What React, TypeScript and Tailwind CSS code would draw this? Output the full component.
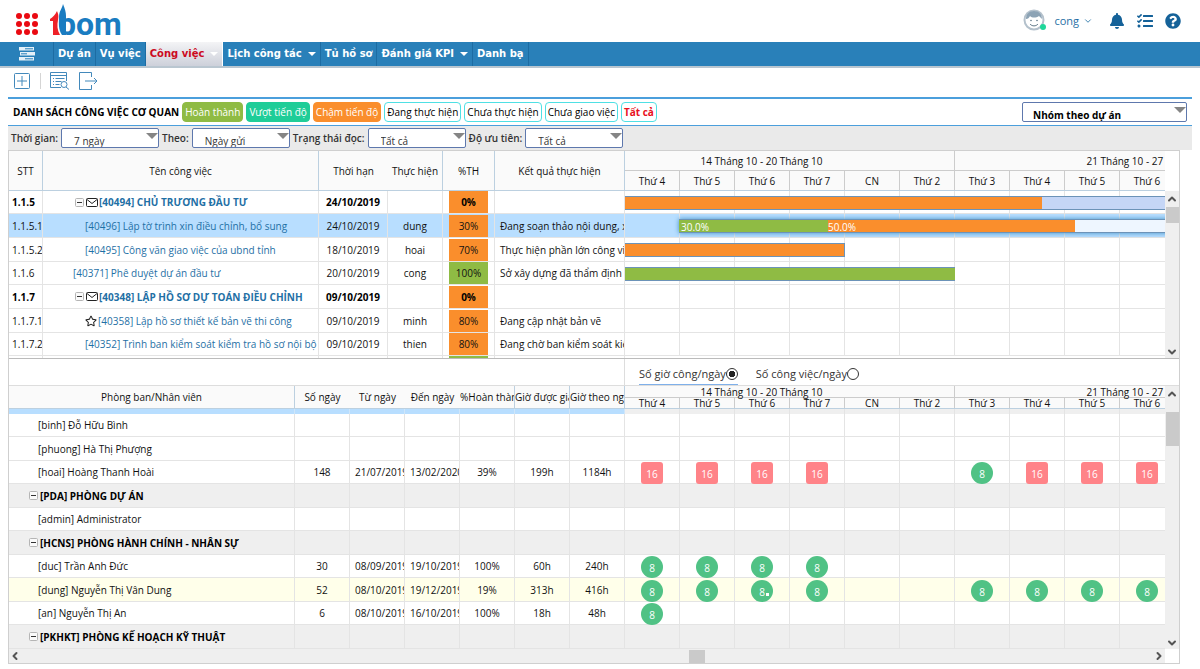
import React from "react";
import clsx from "clsx";
import { FaBell, FaTasks, FaQuestionCircle, FaRegStar } from "react-icons/fa";
import { ChevronDown, ChevronLeft, ChevronRight, ChevronUp } from "lucide-react";

interface Task {
  no: string;
  id: number;
  name: string;
  due: string;
  owner?: string;
  percent: number;
  result?: string;
  indent: string;
  group?: boolean;
  star?: boolean;
  selected?: boolean;
}

interface Staff {
  name: string;
  group?: boolean;
  highlighted?: boolean;
  stats?: string[];
  hours?: Record<number, number>;
}

const days = [
  "Thứ 4", "Thứ 5", "Thứ 6", "Thứ 7", "CN", "Thứ 2", "Thứ 3",
  "Thứ 4", "Thứ 5", "Thứ 6",
];

const navItems = [
  { label: "Dự án" },
  { label: "Vụ việc" },
  { label: "Công việc", menu: true, active: true },
  { label: "Lịch công tác", menu: true },
  { label: "Tủ hồ sơ" },
  { label: "Đánh giá KPI", menu: true },
  { label: "Danh bạ" },
];

const statuses = [
  { label: "Hoàn thành", className: "border-[#8fbb44] bg-[#8fbb44] text-white" },
  { label: "Vượt tiến độ", className: "border-[#1fcd98] bg-[#1fcd98] text-white" },
  { label: "Chậm tiến độ", className: "border-[#fa8e2c] bg-[#fa8e2c] text-white" },
  { label: "Đang thực hiện", className: "border-[#4fe0e4] bg-white text-black" },
  { label: "Chưa thực hiện", className: "border-[#4fe0e4] bg-white text-black" },
  { label: "Chưa giao việc", className: "border-[#4fe0e4] bg-white text-black" },
  { label: "Tất cả", className: "border-[#4fe0e4] bg-white font-bold text-[#e8101c]" },
];

const filters = [
  { id: "period", label: "Thời gian:", value: "7 ngày" },
  { id: "by", label: "Theo:", value: "Ngày gửi" },
  { id: "read", label: "Trạng thái đọc:", value: "Tất cả" },
  { id: "priority", label: "Độ ưu tiên:", value: "Tất cả" },
];

const tasks: Task[] = [
  { no: "1.1.5", id: 40494, name: "CHỦ TRƯƠNG ĐẦU TƯ", due: "24/10/2019", percent: 0, indent: "pl-8", group: true },
  { no: "1.1.5.1", id: 40496, name: "Lập tờ trình xin điều chỉnh, bổ sung", due: "24/10/2019", owner: "dung", percent: 30, result: "Đang soạn thảo nội dung, xin", indent: "pl-[42px]", selected: true },
  { no: "1.1.5.2", id: 40495, name: "Công văn giao việc của ubnd tỉnh", due: "18/10/2019", owner: "hoai", percent: 70, result: "Thực hiện phần lớn công việc", indent: "pl-[42px]" },
  { no: "1.1.6", id: 40371, name: "Phê duyệt dự án đầu tư", due: "20/10/2019", owner: "cong", percent: 100, result: "Sở xây dựng đã thẩm định thiết", indent: "pl-[30px]" },
  { no: "1.1.7", id: 40348, name: "LẬP HỒ SƠ DỰ TOÁN ĐIỀU CHỈNH", due: "09/10/2019", percent: 0, indent: "pl-8", group: true },
  { no: "1.1.7.1", id: 40358, name: "Lập hồ sơ thiết kế bản vẽ thi công", due: "09/10/2019", owner: "minh", percent: 80, result: "Đang cập nhật bản vẽ", indent: "pl-[42px]", star: true },
  { no: "1.1.7.2", id: 40352, name: "Trình ban kiểm soát kiểm tra hồ sơ nội bộ", due: "09/10/2019", owner: "thien", percent: 80, result: "Đang chờ ban kiểm soát kiểm", indent: "pl-[42px]" },
];

const staff: Staff[] = [
  { name: "[binh] Đỗ Hữu Bình" },
  { name: "[phuong] Hà Thị Phượng" },
  {
    name: "[hoai] Hoàng Thanh Hoài",
    stats: ["148", "21/07/2019", "13/02/2020", "39%", "199h", "1184h"],
    hours: { 0: 16, 1: 16, 2: 16, 3: 16, 6: 8, 7: 16, 8: 16, 9: 16 },
  },
  { name: "[PDA] PHÒNG DỰ ÁN", group: true },
  { name: "[admin] Administrator" },
  { name: "[HCNS] PHÒNG HÀNH CHÍNH - NHÂN SỰ", group: true },
  {
    name: "[duc] Trần Anh Đức",
    stats: ["30", "08/09/2019", "19/10/2019", "100%", "60h", "240h"],
    hours: { 0: 8, 1: 8, 2: 8, 3: 8 },
  },
  {
    name: "[dung] Nguyễn Thị Vân Dung",
    stats: ["52", "08/10/2019", "19/12/2019", "19%", "313h", "416h"],
    hours: { 0: 8, 1: 8, 2: 8, 3: 8, 6: 8, 7: 8, 8: 8, 9: 8 },
    highlighted: true,
  },
  {
    name: "[an] Nguyễn Thị An",
    stats: ["6", "08/10/2019", "16/10/2019", "100%", "18h", "48h"],
    hours: { 0: 8 },
  },
  { name: "[PKHKT] PHÒNG KẾ HOẠCH KỸ THUẬT", group: true },
];

const Logo = () => (
  <svg width="76" height="34" viewBox="0 0 76 34" aria-label="1bom">
    <text x="8" y="31" fontFamily="Roboto" fontWeight="700" fontSize="32" fill="#1a7cc1">
      bom
    </text>
    <path d="M8 8h5v23H8z" fill="#fff" />
    <path d="M0 15c3-2 5-4 7-8 1 3 2 4 1 9-1 5-1 10 2 15H3V17H0z" fill="#ee2128" />
    <path d="M13 0c-1 5-4 7-4 13 0 6-1 12 3 18h4V12C16 8 15 5 13 0z" fill="#1a7cc1" />
  </svg>
);

const Avatar = () => (
  <svg width="24" height="24" viewBox="0 0 24 24">
    <circle cx="12" cy="11" r="9.500" fill="#fff" stroke="#b4c1cc" strokeWidth="2" />
    <path d="M4 10c0-5 3-8 8-8s8 3 8 8c-1-1-2-2-3-3-3 2-7 2-9 0-1 2-2 3-4 3z" fill="#8ca3b5" />
    <circle cx="9" cy="11.500" r=".8" fill="#5f7788" />
    <circle cx="15" cy="11.500" r=".8" fill="#5f7788" />
    <path d="M8 15c2 2.500 6 2.500 8 0" fill="none" stroke="#5f7788" />
    <circle cx="21" cy="18" r="3" fill="#1fd79a" />
  </svg>
);

const Triangle = ({ className }: { className?: string }) => (
  <svg viewBox="0 0 12 6" className={className}>
    <path d="M0 0h12L6 6z" fill="currentColor" />
  </svg>
);

const Toggle = () => (
  <svg width="9" height="9" viewBox="0 0 9 9" className="shrink-0">
    <rect x=".5" y=".5" width="8" height="8" rx="1" fill="#fafafa" stroke="#b5b5b5" />
    <path d="M2 4.500h5" stroke="#333" />
  </svg>
);

const Envelope = () => (
  <svg width="12" height="9" viewBox="0 0 12 9" fill="none" stroke="#222" className="shrink-0">
    <rect x=".5" y=".5" width="11" height="8" rx="1" />
    <path d="M1 1.500l5 4 5-4" />
  </svg>
);

interface DropdownProps {
  id: string;
  value: string;
  width: string;
  label?: string;
  bold?: boolean;
}

const Dropdown: React.FC<DropdownProps> = ({ id, value, width, label, bold }) => (
  <div className={clsx("relative h-5", width)}>
    <select
      id={id}
      aria-label={label}
      className={clsx(
        "h-full w-full appearance-none rounded-xs border border-[#5e78ad] bg-white pt-1 leading-4 outline-none",
        bold ? "pl-2.5 font-bold text-black" : "pl-3 text-[#333]"
      )}
    >
      <option>{value}</option>
    </select>
    <Triangle className="pointer-events-none absolute top-[5px] right-px w-3 text-[#858585]" />
  </div>
);

/* Week / day scale shared by the chart and the workload table */
const DayHeader = ({ week, day }: { week: string; day: string }) => (
  <div className="w-max bg-[#fafafa] text-center">
    <div className={clsx("flex border-b border-[#ccc]", week)}>
      <div className="w-[330px] border-r border-[#ccc] pr-14">14 Tháng 10 - 20 Tháng 10</div>
      <div className="w-[385px]">21 Tháng 10 - 27 Tháng 10</div>
    </div>
    <div className={clsx("flex border-b border-[#bcd0e0]", day)}>
      {days.map((d, i) => (
        <div key={i} className="w-[55px] border-r border-[#ccc]">
          {d}
        </div>
      ))}
    </div>
  </div>
);

const Bar = ({ left, children }: { left: string; children: React.ReactNode }) => (
  <div
    className={clsx(
      "absolute top-[5px] flex h-[14px] border-y border-[#6c93b8] leading-[15px] text-white",
      left
    )}
  >
    {children}
  </div>
);

const taskBars: Record<number, React.ReactNode> = {
  40494: (
    <Bar left="left-0">
      <div className="w-[417px] bg-[#fa8e2c]" />
      <div className="w-[200px] bg-[#c5d6f6]" />
    </Bar>
  ),
  40496: (
    <Bar left="left-[54px] shadow-[0_0_5px_#3f8fc4]">
      <div className="w-[149px] bg-[#8fbb44] pl-0.5">30.0%</div>
      <div className="w-[247px] bg-[#fa8e2c]">50.0%</div>
      <div className="w-[200px] bg-[#eef6ff]" />
    </Bar>
  ),
  40495: (
    <Bar left="left-0">
      <div className="w-[220px] border-r border-[#6c93b8] bg-[#fa8e2c]" />
    </Bar>
  ),
  40371: (
    <Bar left="left-0">
      <div className="w-[330px] bg-[#8fbb44]" />
    </Bar>
  ),
};

const TaskTable = () => (
  <table className="w-[616px] shrink-0 table-fixed border-separate border-spacing-0">
    <colgroup>
      <col className="w-[34px]" />
      <col className="w-[276px]" />
      <col className="w-[69px]" />
      <col className="w-[55px]" />
      <col className="w-[52px]" />
      <col className="w-[130px]" />
    </colgroup>
    <thead>
      <tr className="h-10 bg-[#fafafa] *:border-b *:border-[#bcd0e0] *:font-normal">
        <th className="border-r">STT</th>
        <th className="border-r">Tên công việc</th>
        <th>Thời hạn</th>
        <th className="border-r">Thực hiện</th>
        <th className="border-r">%TH</th>
        <th className="border-r">Kết quả thực hiện</th>
      </tr>
    </thead>
    <tbody>
      {tasks.map((task) => (
        <tr
          key={task.id}
          className={clsx(
            "h-6 whitespace-nowrap *:overflow-hidden *:border-r *:border-b *:border-[#e4e4e4] nth-[3n+1]:h-[23px]",
            task.group && "font-bold text-black",
            task.selected && "bg-[#b8deff]"
          )}
        >
          <td className="pl-[3px]">{task.no}</td>
          <td className={task.indent}>
            <a href="#" className="flex items-center text-[#1f70a5]">
              {task.group && (
                <span className="mr-px flex items-center gap-0.5">
                  <Toggle />
                  <Envelope />
                </span>
              )}
              {task.star && <FaRegStar className="mr-px h-3 w-3 shrink-0 text-[#222]" />}
              [{task.id}] {task.name}
            </a>
          </td>
          <td className="text-center">{task.due}</td>
          <td className="text-center">{task.owner}</td>
          <td className="px-1.5 text-center">
            <div className={clsx("leading-[22px]", task.percent === 100 ? "bg-[#8fbb44]" : "bg-[#fa8e2c]")}>
              {task.percent}%
            </div>
          </td>
          <td className="pl-[5px]">{task.result}</td>
        </tr>
      ))}
      <tr className="h-6 *:border-r *:border-[#e4e4e4]">
        <td />
        <td />
        <td />
        <td />
        <td className="px-1.5">
          <div className="h-6 bg-[#8fbb44]" />
        </td>
        <td />
      </tr>
    </tbody>
  </table>
);

const TaskChart = () => (
  <div className="min-w-0 flex-1 overflow-hidden">
    <DayHeader week="h-5 leading-5" day="h-5 leading-5" />
    {tasks.map((task) => (
      <div
        key={task.id}
        className={clsx(
          "relative flex h-6 w-max border-b border-[#e4e4e4] nth-[3n+2]:h-[23px]",
          task.selected && "bg-[#b8deff]"
        )}
      >
        {days.map((_, i) => (
          <div key={i} className="w-[55px] border-r border-[#e4e4e4]" />
        ))}
        {taskBars[task.id]}
      </div>
    ))}
  </div>
);

const StaffTable = () => (
  <table className="w-[616px] shrink-0 table-fixed border-separate border-spacing-0">
    <colgroup>
      <col className="w-[286px]" />
      <col className="w-[55px]" />
      <col className="w-[55px]" />
      <col className="w-[55px]" />
      <col className="w-[55px]" />
      <col className="w-[55px]" />
      <col className="w-[55px]" />
    </colgroup>
    <thead>
      <tr className="h-[23px] bg-[#fafafa] whitespace-nowrap *:overflow-hidden *:border-b *:border-[#bcd0e0] *:font-normal">
        <th className="border-r">Phòng ban/Nhân viên</th>
        <th>Số ngày</th>
        <th>Từ ngày</th>
        <th>Đến ngày</th>
        <th className="border-r text-left">%Hoàn thành</th>
        <th className="border-r text-left">Giờ được giao</th>
        <th className="border-r text-left">Giờ theo ngày</th>
      </tr>
    </thead>
    <tbody>
      <tr className="h-[5px] bg-[#b8deff] *:border-r *:border-[#cfe6fa]">
        {Array.from({ length: 7 }, (_, i) => (
          <td key={i} />
        ))}
      </tr>
      {staff.map((person) => (
        <tr
          key={person.name}
          className={clsx(
            "h-6 whitespace-nowrap *:overflow-hidden *:border-r *:border-b *:border-[#e4e4e4] even:h-[23px]",
            person.group && "bg-[#efefef] font-bold text-black",
            person.highlighted && "bg-[#ffffea]"
          )}
        >
          <td className={person.group ? "pl-5" : "pl-[29px]"}>
            <span className="flex items-center gap-0.5">
              {person.group && <Toggle />}
              {person.name}
            </span>
          </td>
          {Array.from({ length: 6 }, (_, i) => (
            <td key={i} className={i === 1 || i === 2 ? "pl-[5px]" : "text-center"}>
              {person.stats?.[i]}
            </td>
          ))}
        </tr>
      ))}
    </tbody>
  </table>
);

const WorkloadTable = () => (
  <div className="min-w-0 flex-1 overflow-hidden">
    <DayHeader week="h-[12px] leading-[12px]" day="h-[11px] leading-[11px]" />
    <table className="w-[550px] table-fixed border-separate border-spacing-0">
      <tbody>
        <tr className="h-[5px] bg-[#efefef] *:border-r *:border-[#e4e4e4]">
          {days.map((_, i) => (
            <td key={i} />
          ))}
        </tr>
        {staff.map((person) => (
          <tr
            key={person.name}
            className={clsx(
              "h-6 *:border-r *:border-b *:border-[#e4e4e4] even:h-[23px]",
              person.group && "bg-[#efefef]",
              person.highlighted && "bg-[#ffffea]"
            )}
          >
            {days.map((_, i) => {
              const hours = person.hours?.[i];
              return (
                <td key={i} className="p-0">
                  {hours && (
                    <div
                      className={clsx(
                        "relative mx-auto mt-px -mb-px h-[22px] w-[22px] text-center leading-6 text-white",
                        hours > 8 ? "rounded-[3px] bg-[#ff8388]" : "rounded-full bg-[#50c285]"
                      )}
                    >
                      {hours}
                      {person.highlighted && i === 2 && (
                        <span className="absolute right-1 bottom-1.5 h-[3px] w-[3px] bg-white" />
                      )}
                    </div>
                  )}
                </td>
              );
            })}
          </tr>
        ))}
      </tbody>
    </table>
  </div>
);

const VerticalScroll = ({ thumb }: { thumb: string }) => (
  <div className="flex flex-1 flex-col items-center bg-[#efefef] text-[#555]">
    <ChevronUp className="my-0.5 h-3 w-3" strokeWidth={4} />
    <div className={clsx("w-[13px] bg-[#cacaca]", thumb)} />
    <ChevronDown className="mt-auto h-3 w-3" strokeWidth={4} />
  </div>
);

export default function App() {
  return (
    <div className="min-h-screen bg-white font-['Open_Sans',sans-serif] text-[10px] leading-4 text-[#111]">
      <header className="flex h-[42px] items-center">
        <button aria-label="Ứng dụng" className="ml-4 grid grid-cols-3 gap-0.5 pt-1.5">
          {Array.from({ length: 9 }, (_, i) => (
            <span key={i} className="h-1.5 w-1.5 rounded-full bg-[#ea0a12]" />
          ))}
        </button>
        <a href="#" className="ml-3">
          <Logo />
        </a>
        <div className="mr-[19px] ml-auto flex items-center text-[#156299]">
          <Avatar />
          <button className="ml-2 flex items-center gap-1 text-[11px] text-[#1f70a5]">
            cong
            <ChevronDown className="h-2.5 w-2.5" />
          </button>
          <button aria-label="Thông báo" className="ml-4">
            <FaBell className="h-4 w-4" />
          </button>
          <button aria-label="Việc cần làm" className="ml-3">
            <FaTasks className="h-4 w-4" />
          </button>
          <button aria-label="Trợ giúp" className="ml-3">
            <FaQuestionCircle className="h-4 w-4" />
          </button>
        </div>
      </header>

      <nav className="flex h-[26px] border-b-2 border-[#b9c6d0] bg-[#2980b9] font-['DejaVu_Sans',sans-serif] font-bold text-white">
        <button aria-label="Menu" className="flex w-[54px] items-center justify-center border-r border-[#1c6ca3]">
          <svg width="16" height="14" viewBox="0 0 16 14">
            <path d="M0 0h15v3.500H0zM1 5h15v3.500H1zM0 10h15v3.500H0z" fill="#e4f0f8" />
            <path d="M6 1.800h8M2 6.800h6M6 11.800h8" stroke="#2980b9" />
          </svg>
        </button>
        {navItems.map((item) => (
          <a
            key={item.label}
            href="#"
            className={clsx(
              "flex items-center gap-1.5 border-r px-1",
              item.active
                ? "border-white bg-linear-to-b from-[#f4f4f6] to-[#cdd0da] text-[#cc0a1e]"
                : "border-[#1c6ca3]"
            )}
          >
            {item.label}
            {item.menu && <Triangle className="w-2 text-white" />}
          </a>
        ))}
      </nav>

      <div className="mx-2">
        <div className="flex h-[29px] items-center pb-[3px] pl-1.5 text-[#4389bb]">
          <button aria-label="Thêm mới">
            <svg width="16" height="16" viewBox="0 0 16 16" fill="none" stroke="currentColor">
              <rect x=".5" y=".5" width="15" height="15" rx="1" />
              <path d="M8 3v10M3 8h10" />
            </svg>
          </button>
          <span className="mr-[9px] ml-[10px] h-4 w-px bg-[#d5d5d5]" />
          <button aria-label="Tìm kiếm">
            <svg width="20" height="18" viewBox="0 0 20 18" fill="none" stroke="currentColor">
              <path d="M11 15.500H.5V.5h16V9M.5 3.500h16" />
              <path d="M3 6.500h1M3 9.500h1M3 12.500h1M5.500 6.500h9M5.500 9.500h6M5.500 12.500h4" />
              <circle cx="14" cy="12.500" r="3" />
              <path d="M16 15l3 2.500" />
            </svg>
          </button>
          <button aria-label="Xuất dữ liệu" className="ml-[9px]">
            <svg width="19" height="18" viewBox="0 0 19 18" fill="none" stroke="currentColor">
              <path d="M12.500 5V.5H.5v17h12V13M6 9h12M15 6l3 3-3 3" />
            </svg>
          </button>
        </div>

        <div className="flex h-[29px] items-center gap-[3px] border-t-2 border-b border-[#4b9fdc] pl-[5px]">
          <h1 className="font-bold text-black">DANH SÁCH CÔNG VIỆC CƠ QUAN</h1>
          {statuses.map((status) => (
            <button
              key={status.label}
              className={clsx("h-5 rounded-sm border px-0.5 whitespace-nowrap", status.className)}
            >
              {status.label}
            </button>
          ))}
          <div className="mr-[5px] ml-auto">
            <Dropdown id="grouping" label="Nhóm" value="Nhóm theo dự án" width="w-[165px]" bold />
          </div>
        </div>

        <div className="flex h-6 items-center gap-[3px] bg-[#eaeaea] pl-[3px]">
          {filters.map((f) => (
            <React.Fragment key={f.id}>
              <label htmlFor={f.id} className="font-semibold text-[#333]">
                {f.label}
              </label>
              <Dropdown id={f.id} value={f.value} width="w-[98px]" />
            </React.Fragment>
          ))}
        </div>

        <main className="mr-3 border border-[#cfcfcf]">
          <section className="flex h-[208px] overflow-hidden border-b border-[#bbb]">
            <TaskTable />
            <TaskChart />
            <div className="flex w-[14px] flex-col pt-10">
              <VerticalScroll thumb="h-4" />
            </div>
          </section>

          <section>
            <div className="flex h-[27px] border-b border-[#ddd] text-[11px] text-[#333]">
              <div className="w-[616px] shrink-0 border-r border-[#ddd]" />
              <label className="ml-3.5 flex items-center border-b border-[#7fb0ea] pt-1">
                Số giờ công/ngày
                <input
                  type="radio"
                  name="unit"
                  defaultChecked
                  className="h-3 w-3 appearance-none rounded-full border border-[#333] checked:bg-[radial-gradient(#222_45%,transparent_50%)]"
                />
              </label>
              <label className="ml-[18px] flex items-center pt-1">
                Số công việc/ngày
                <input
                  type="radio"
                  name="unit"
                  className="h-3 w-3 appearance-none rounded-full border border-[#333] checked:bg-[radial-gradient(#222_45%,transparent_50%)]"
                />
              </label>
            </div>
            <div className="flex">
              <StaffTable />
              <WorkloadTable />
              <div className="flex w-[14px] flex-col">
                <VerticalScroll thumb="mt-2.5 h-[34px]" />
              </div>
            </div>
          </section>

          <div className="mr-[14px] flex h-[14px] items-center bg-[#efefef] text-[#555]">
            <ChevronLeft className="h-3 w-3" strokeWidth={4} />
            <div className="flex-1">
              <div className="ml-[59%] h-[13px] w-4 bg-[#cacaca]" />
            </div>
            <ChevronRight className="h-3 w-3" strokeWidth={4} />
          </div>
        </main>
      </div>
    </div>
  );
}
